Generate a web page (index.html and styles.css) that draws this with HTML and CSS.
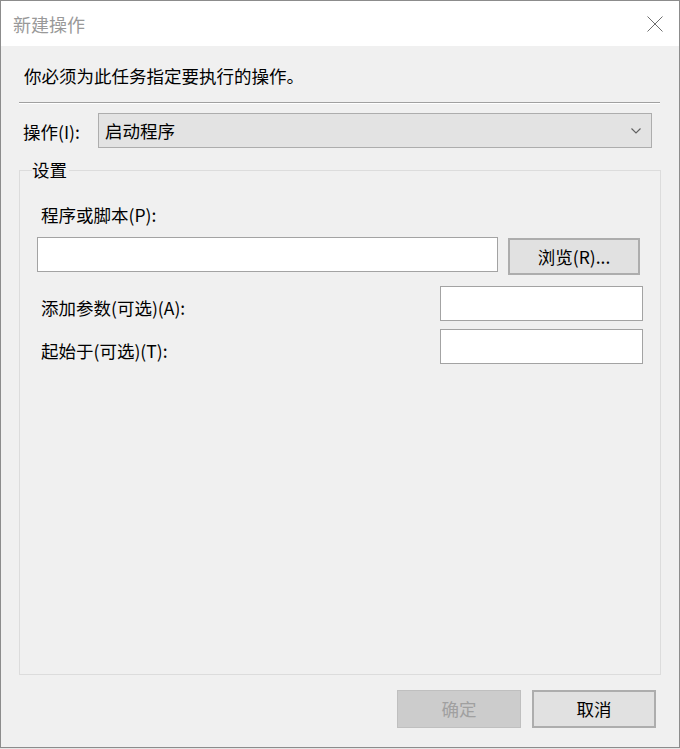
FILE: index.html
```html
<!DOCTYPE html>
<html lang="zh-CN">
<head>
<meta charset="utf-8">
<title>新建操作</title>
<link rel="stylesheet" href="styles.css">
</head>
<body>
<div class="window">
  <div class="titlebar">
    <span class="title">新建操作</span>
    <svg class="close" width="16" height="16" viewBox="0 0 16 16"><path d="M0.5 0.5 L15.5 15.5 M15.5 0.5 L0.5 15.5" stroke="#6e6e6e" stroke-width="1" fill="none"/></svg>
  </div>
  <div class="content">
    <div class="desc">你必须为此任务指定要执行的操作。</div>
    <div class="separator"></div>
    <div class="action-row">
      <span class="label action-label">操作(I):</span>
      <div class="combo">
        <span class="combo-text">启动程序</span>
        <svg class="chevron" width="10" height="6" viewBox="0 0 10 6"><path d="M0.5 0.5 L5 5 L9.5 0.5" stroke="#606060" stroke-width="1.1" fill="none"/></svg>
      </div>
    </div>
    <fieldset class="group">
      <legend class="legend">设置</legend>
      <div class="group-body">
        <div class="label prog-label">程序或脚本(P):</div>
        <div class="prog-row">
          <div class="input prog-input"></div>
          <div class="button browse">浏览(R)...</div>
        </div>
        <div class="field-row args-row">
          <span class="label field-label">添加参数(可选)(A):</span>
          <div class="input small-input"></div>
        </div>
        <div class="field-row start-row">
          <span class="label field-label">起始于(可选)(T):</span>
          <div class="input small-input"></div>
        </div>
      </div>
    </fieldset>
    <div class="button-row">
      <div class="button disabled">确定</div>
      <div class="button">取消</div>
    </div>
  </div>
</div>
</body>
</html>
```
FILE: styles.css
```css
* { box-sizing: border-box; }
html, body {
  margin: 0;
  padding: 0;
}
body {
  background: #e6e6e6;
  font-family: "Noto Sans CJK SC", "Noto Sans", sans-serif;
  font-size: 17.5px;
  color: #000;
}
.window {
  width: 680px;
  height: 748px;
  border: 1px solid #8c8c8c;
  display: flex;
  flex-direction: column;
  background: #f0f0f0;
}
.titlebar {
  height: 45px;
  background: #fff;
  display: flex;
  align-items: center;
  justify-content: space-between;
  padding: 0 16px 0 12px;
  flex: none;
}
.title {
  font-size: 18px;
  color: #999;
  line-height: 24px;
}
.close { display: block; }
.content {
  flex: 1;
  display: flex;
  flex-direction: column;
  padding: 18px 18px 19px 18px;
  min-height: 0;
}
.desc {
  line-height: 24px;
  padding-left: 5px;
}
.separator {
  margin-top: 14px;
  margin-right: 1px;
  height: 2px;
  border-top: 1px solid #a0a0a0;
  border-bottom: 1px solid #fff;
}
.action-row {
  margin-top: 9px;
  display: flex;
  align-items: center;
}
.label { line-height: 24px; white-space: nowrap; }
.action-label {
  padding-left: 4px;
  width: 79px;
  padding-top: 3px;
}
.combo {
  flex: 1;
  margin-right: 9px;
  height: 35px;
  background: #e3e3e3;
  border: 1px solid #adadad;
  display: flex;
  align-items: center;
  justify-content: space-between;
  padding: 0 10px 0 6px;
}
.combo-text { line-height: 24px; }
.chevron { display: block; }
.group {
  margin: 10px 0 0 0;
  padding: 0;
  border: 1px solid #dcdcdc;
  flex: 1;
  min-height: 0;
  min-width: 0;
}
.legend {
  margin-left: 12px;
  padding: 0 2px 0 0;
  line-height: 24px;
}
.group-body {
  padding: 21px 17px 0 17px;
}
.prog-label { padding-left: 4px; }
.prog-row {
  margin-top: 10px;
  display: flex;
  align-items: flex-start;
}
.input {
  height: 35px;
  background: #fff;
  border: 1px solid #a3a3a3;
}
.prog-input {
  width: 461px;
}
.button {
  height: 38px;
  width: 124px;
  background: #e1e1e1;
  border: 2px solid #adadad;
  display: flex;
  align-items: center;
  justify-content: center;
  line-height: 24px;
}
.browse {
  margin-left: 10px;
  margin-top: 1px;
  width: 132px;
  height: 37px;
}
.field-row {
  display: flex;
  justify-content: space-between;
  align-items: center;
}
.args-row { margin-top: 11px; }
.start-row { margin-top: 8px; }
.field-label {
  padding-left: 4px;
  padding-top: 8px;
}
.small-input {
  width: 203px;
}
.button-row {
  margin-top: 15px;
  display: flex;
  justify-content: flex-end;
  gap: 11px;
  padding-right: 5px;
}
.button.disabled {
  background: #cccccc;
  border: 1px solid #bfbfbf;
  color: #a0a0a0;
}
```
